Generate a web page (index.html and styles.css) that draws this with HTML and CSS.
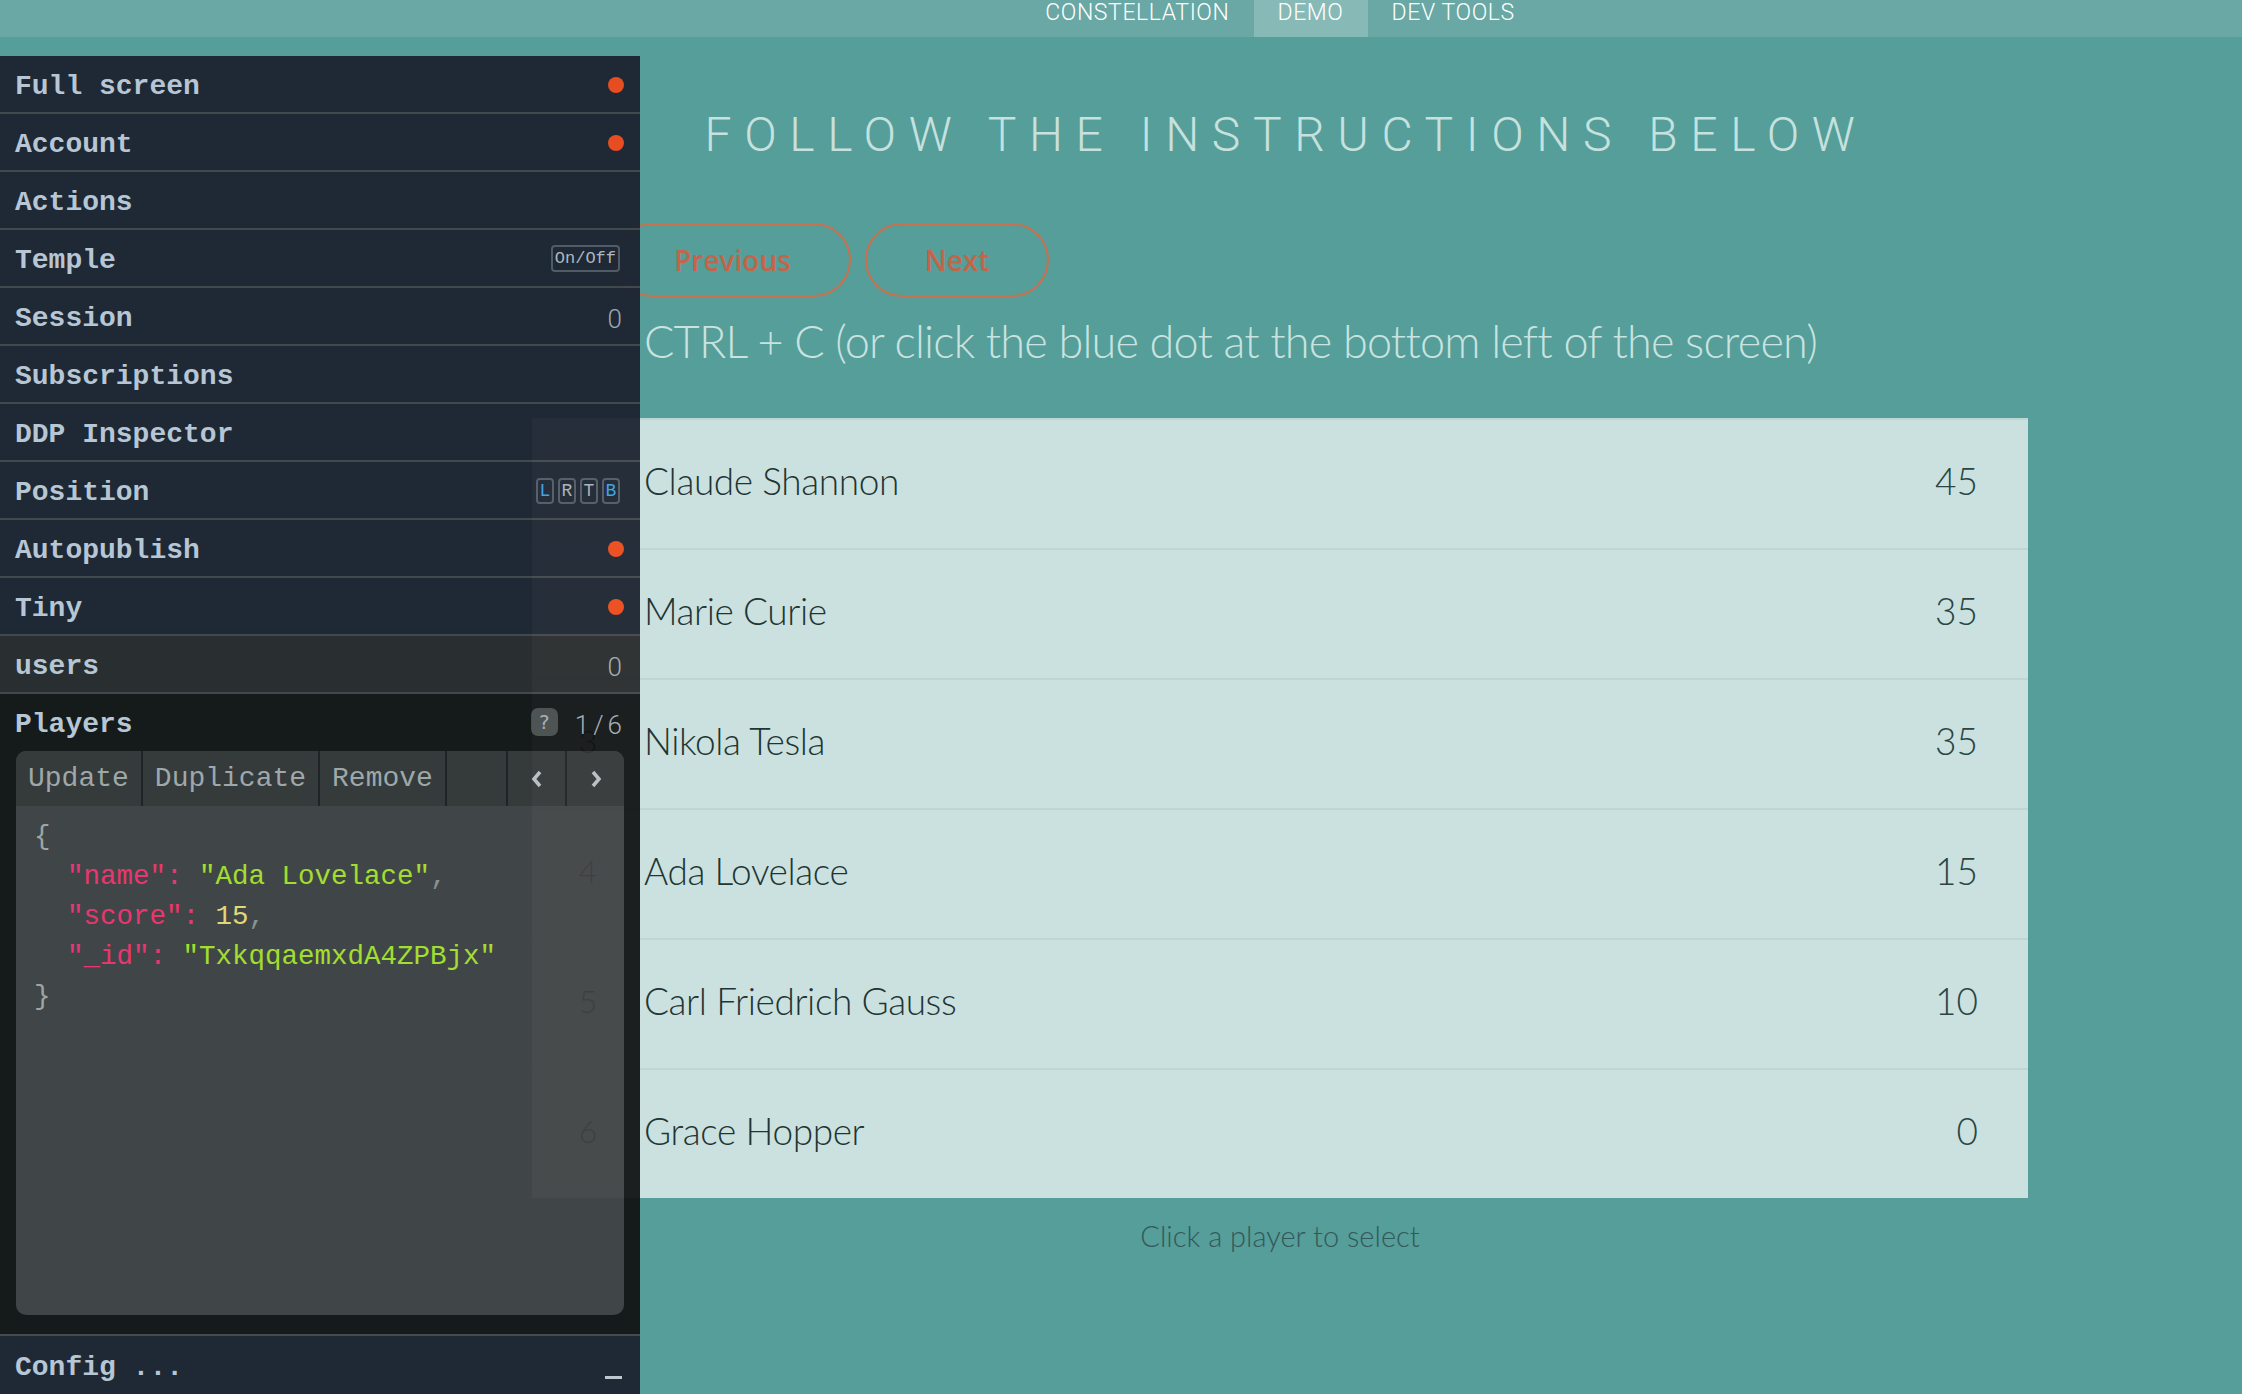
FILE: index.html
```html
<!DOCTYPE html>
<html lang="en">
<head>
<meta charset="utf-8">
<title>Constellation Demo</title>
<link rel="stylesheet" href="styles.css">
</head>
<body>
<nav class="topnav">
  <a class="navitem">CONSTELLATION</a>
  <a class="navitem active">DEMO</a>
  <a class="navitem">DEV TOOLS</a>
</nav>

<main class="page">
  <div class="content">
    <h1 class="title">FOLLOW THE INSTRUCTIONS BELOW</h1>
    <div class="steps">
      <button class="pill prev">Previous</button>
      <button class="pill next">Next</button>
    </div>
    <p class="instruction">CTRL + C (or click the blue dot at the bottom left of the screen)</p>
    <div class="leaderboard">
      <div class="player"><span class="rank"></span><span class="name">Claude Shannon</span><span class="score">45</span></div>
      <div class="player"><span class="rank"></span><span class="name">Marie Curie</span><span class="score">35</span></div>
      <div class="player"><span class="rank">3</span><span class="name">Nikola Tesla</span><span class="score">35</span></div>
      <div class="player"><span class="rank">4</span><span class="name">Ada Lovelace</span><span class="score">15</span></div>
      <div class="player"><span class="rank">5</span><span class="name">Carl Friedrich Gauss</span><span class="score">10</span></div>
      <div class="player"><span class="rank">6</span><span class="name">Grace Hopper</span><span class="score">0</span></div>
    </div>
    <p class="hint">Click a player to select</p>
  </div>
</main>

<aside class="devpanel">
  <div class="prow"><span class="plabel">Full screen</span><span class="dot"></span></div>
  <div class="prow"><span class="plabel">Account</span><span class="dot"></span></div>
  <div class="prow"><span class="plabel">Actions</span></div>
  <div class="prow"><span class="plabel">Temple</span><span class="toggle">On/Off</span></div>
  <div class="prow"><span class="plabel">Session</span><span class="count">0</span></div>
  <div class="prow"><span class="plabel">Subscriptions</span></div>
  <div class="prow"><span class="plabel">DDP Inspector</span></div>
  <div class="prow"><span class="plabel">Position</span>
    <span class="posbtns"><span class="pos on">L</span><span class="pos">R</span><span class="pos">T</span><span class="pos on">B</span></span>
  </div>
  <div class="prow"><span class="plabel">Autopublish</span><span class="dot"></span></div>
  <div class="prow"><span class="plabel">Tiny</span><span class="dot"></span></div>
  <div class="prow users"><span class="plabel">users</span><span class="count">0</span></div>

  <section class="players">
    <div class="players-head">
      <span class="plabel">Players</span>
      <span class="meta"><span class="help">?</span><span class="count">1/6</span></span>
    </div>
    <div class="editor">
      <div class="toolbar">
        <span class="tbtn">Update</span>
        <span class="tbtn">Duplicate</span>
        <span class="tbtn">Remove</span>
        <span class="tbtn spacer"></span>
        <span class="tbtn arrow"><svg width="12" height="18" viewBox="0 0 12 18"><polyline points="9,2 3,9 9,16" fill="none" stroke="#b9bfc2" stroke-width="3.5"/></svg></span>
        <span class="tbtn arrow last"><svg width="12" height="18" viewBox="0 0 12 18"><polyline points="3,2 9,9 3,16" fill="none" stroke="#b9bfc2" stroke-width="3.5"/></svg></span>
      </div>
<pre class="code">{
  <span class="k">"name"</span><span class="k">:</span> <span class="s">"Ada Lovelace"</span><span class="p">,</span>
  <span class="k">"score"</span><span class="k">:</span> <span class="n">15</span><span class="p">,</span>
  <span class="k">"_id"</span><span class="k">:</span> <span class="s">"TxkqqaemxdA4ZPBjx"</span>
}</pre>
    </div>
  </section>

  <div class="prow config"><span class="plabel">Config ...</span><span class="minimize"></span></div>
</aside>
</body>
</html>
```

FILE: styles.css
```css
* { box-sizing: border-box; }

html, body {
  margin: 0;
  padding: 0;
  height: 100%;
}

body {
  background: #559e99;
  font-family: "Lato", "Roboto", sans-serif;
  overflow: hidden;
}

/* ---------- top navigation ---------- */
.topnav {
  height: 37px;
  background: #69a8a4;
  display: flex;
  justify-content: center;
  padding-left: 318px;
}

.navitem {
  display: block;
  height: 37px;
  padding: 0 24px;
  font-family: "Roboto", sans-serif;
  font-weight: 300;
  font-size: 23px;
  line-height: 26px;
  letter-spacing: 0.6px;
  color: #ffffff;
}

.navitem.active {
  background: #87bab6;
}

/* ---------- page content ---------- */
.page {
  margin-left: 318px;
  width: 1924px;
}

.content {
  width: 1496px;
  margin: 0 auto;
}

.title {
  margin: 70px 0 0;
  padding-left: 12px;
  text-align: center;
  font-family: "Roboto", sans-serif;
  font-weight: 300;
  font-size: 48px;
  line-height: 56px;
  letter-spacing: 12.6px;
  color: #c6e1de;
}

.steps {
  display: flex;
  gap: 14px;
  margin-top: 60px;
  padding-left: 82px;
}

.pill {
  height: 74px;
  border: 2px solid #c9704f;
  border-radius: 37px;
  background: transparent;
  font-family: "Open Sans", sans-serif;
  font-weight: 600;
  font-size: 28px;
  color: #c4654a;
  padding: 0;
}

.pill.prev { width: 237px; }
.pill.next { width: 184px; }

.instruction {
  margin: 16px 0 0;
  padding-left: 112px;
  font-family: "Lato", sans-serif;
  font-weight: 300;
  font-size: 45px;
  line-height: 56px;
  letter-spacing: -0.8px;
  color: #c9e3e0;
  white-space: nowrap;
}

.leaderboard {
  margin-top: 49px;
  background: #cbe1df;
}

.player {
  display: flex;
  align-items: center;
  height: 130px;
  padding-bottom: 8px;
  border-top: 2px solid #bcd6d3;
  font-family: "Lato", sans-serif;
  font-weight: 300;
  color: #1f3534;
}

.rank {
  width: 112px;
  text-align: center;
  font-size: 32px;
}

.name {
  flex: 1;
  font-size: 37px;
  letter-spacing: -0.4px;
}

.score {
  padding-right: 50px;
  font-size: 37px;
  color: #2a4544;
}

.hint {
  margin: 18px 0 0;
  text-align: center;
  font-family: "Lato", sans-serif;
  font-weight: 300;
  font-size: 29px;
  line-height: 40px;
  color: #34585a;
}

/* ---------- dev tools panel ---------- */
.devpanel {
  position: fixed;
  left: 0;
  top: 56px;
  width: 640px;
  height: 1338px;
  display: flex;
  flex-direction: column;
  opacity: 0.94;
  background: #1b222f;
  font-family: "Liberation Mono", "Courier New", monospace;
}

.prow {
  height: 58px;
  flex: none;
  display: flex;
  align-items: center;
  justify-content: space-between;
  padding: 5px 18px 0 15px;
  background: #1b222f;
  border-bottom: 2px solid #404449;
}

.plabel {
  font-weight: bold;
  font-size: 28px;
  color: #bec9d8;
}

.dot {
  width: 16px;
  height: 16px;
  border-radius: 50%;
  background: #f0491a;
  margin: -4px -2px 0 0;
}

.toggle {
  font-size: 17px;
  line-height: 21px;
  color: #b3bac2;
  border: 2px solid #4f5965;
  border-radius: 4px;
  padding: 1px 2px;
  margin: -4px 2px 0 0;
}

.count {
  font-family: "Roboto", sans-serif;
  font-weight: 300;
  font-size: 26px;
  color: #a3abb3;
  letter-spacing: 4px;
  margin-right: -4px;
}

.posbtns {
  display: flex;
  gap: 4px;
  margin: -4px 2px 0 0;
}

.pos {
  width: 18px;
  height: 26px;
  border: 2px solid #4f5965;
  border-radius: 4px;
  font-size: 18px;
  line-height: 22px;
  text-align: center;
  color: #a9b0b8;
}

.pos.on { color: #3ba0e4; }

.prow.users {
  background: #27292b;
}

.players {
  flex: none;
  height: 640px;
  background: #111314;
  padding: 0 16px 19px;
  display: flex;
  flex-direction: column;
}

.players-head {
  height: 57px;
  display: flex;
  align-items: center;
  justify-content: space-between;
  padding: 4px 2px 0 0;
  margin-left: -1px;
}

.meta {
  display: flex;
  align-items: center;
  gap: 17px;
}

.help {
  width: 27px;
  height: 28px;
  border-radius: 7px;
  background: #474a4b;
  color: #a8acac;
  font-family: "DejaVu Sans", sans-serif;
  font-size: 20px;
  line-height: 28px;
  text-align: center;
  margin-top: -6px;
}

.editor {
  flex: 1;
  border-radius: 10px;
  overflow: hidden;
  background: #3f4142;
  display: flex;
  flex-direction: column;
}

.toolbar {
  height: 55px;
  display: flex;
  background: #333536;
}

.tbtn {
  display: flex;
  align-items: center;
  justify-content: center;
  padding: 0 12px;
  border-right: 2px solid #1c1e1f;
  font-size: 28px;
  color: #a3a9ac;
}

.tbtn.spacer { flex: 1; }
.tbtn.arrow { width: 59px; padding: 0; }
.tbtn.arrow.last { width: 57px; border-right: 0; }

.code {
  margin: 0;
  padding: 11px 18px;
  font-family: "Liberation Mono", "Courier New", monospace;
  font-size: 27.5px;
  line-height: 40px;
  color: #a2a6a6;
}

.code .k { color: #f4306e; }
.code .s { color: #a8e22a; }
.code .n { color: #e8dc78; }
.code .p { color: #8d9292; }

.prow.config {
  height: 60px;
  border-bottom: 0;
  border-top: 2px solid #43484c;
}

.minimize {
  align-self: flex-end;
  width: 17px;
  height: 3px;
  background: #c3cbd3;
  margin-bottom: 15px;
}
```
